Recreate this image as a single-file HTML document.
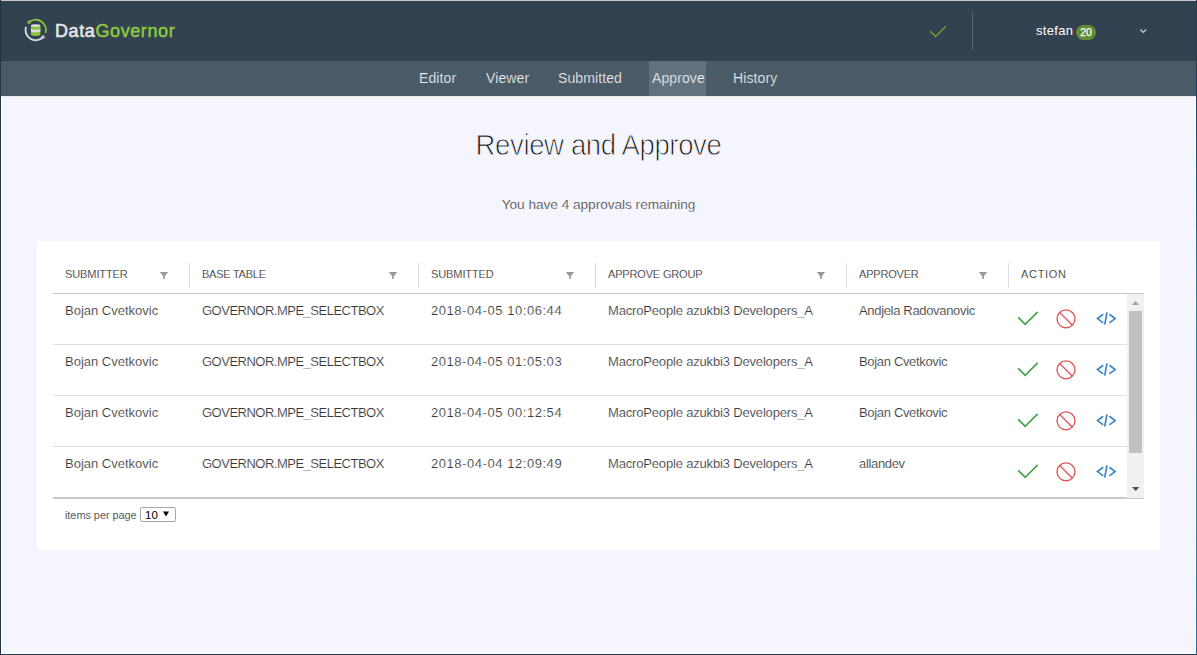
<!DOCTYPE html>
<html><head><meta charset="utf-8">
<style>
*{box-sizing:border-box;margin:0;padding:0}
html,body{width:1197px;height:655px;overflow:hidden;background:#f5f6fd;font-family:"Liberation Sans",sans-serif}
.abs{position:absolute}
svg.abs{overflow:visible}
#topline{left:0;top:0;width:1197px;height:1px;background:#cbc7ca}
#lb{left:0;top:0;width:1px;height:655px;background:#263545}
#rb{left:1196px;top:0;width:1px;height:655px;background:linear-gradient(#2c3b4d 0,#2c3b4d 60px,#1d3c60 96px,#1e5a88 200px,#2a86a0 310px,#3a8a9c 520px,#2a6aa0 655px)}
#rw{left:1195px;top:96px;width:1px;height:558px;background:#fff}
#bb{left:0;top:654px;width:1197px;height:1px;background:#2c3b4d}
#bw{left:1px;top:653px;width:1195px;height:1px;background:#fff}
#lw{left:1px;top:96px;width:1px;height:558px;background:#fff}
#header{left:1px;top:1px;width:1195px;height:60px;background:#334250}
#nav{left:1px;top:61px;width:1195px;height:35px;background:#4a5a66}
#logo-text{left:55px;top:20.5px;font-size:18px;line-height:21px;font-weight:normal;color:#e4e4e6;white-space:nowrap;-webkit-text-stroke:0.55px #e4e4e6;letter-spacing:0.6px}
#logo-text span{-webkit-text-stroke:0.55px #8cc63f}
#logo-text span{color:#8cc63f}
.navi{top:71px;font-size:14px;line-height:14px;color:#eef1f3;white-space:nowrap;letter-spacing:0.1px;-webkit-text-stroke:0.2px #4a5a66}
#nav-active{left:649px;top:61px;width:57px;height:35px;background:#62717d}
#title{left:0;width:1197px;top:131px;text-align:center;font-size:29px;line-height:29px;color:#111;white-space:nowrap;letter-spacing:-0.4px;transform:scaleX(0.95);transform-origin:598.5px 0;-webkit-text-stroke:0.9px #f5f6fd}
#sub{left:0;width:1197px;top:198px;text-align:center;font-size:13.7px;line-height:14px;color:#444;white-space:nowrap;letter-spacing:-0.05px;-webkit-text-stroke:0.2px #f5f6fd}
#card{left:37px;top:241px;width:1123px;height:309px;background:#fff;border-radius:3px}
.th{top:269px;font-size:11px;line-height:11px;color:#2a2a2a;white-space:nowrap;-webkit-text-stroke:0.15px #fff}
.sep{top:263px;width:1px;height:25px;background:#dcdcdc}
.td{font-size:13px;line-height:13px;color:#383838;white-space:nowrap;-webkit-text-stroke:0.15px #fff}
.hr{left:53px;width:1074px;height:1px;background:#dedede}
.filt{top:270px}
#chk{left:0;top:0}
#vsep{left:972px;top:11px;width:1px;height:40px;background:#56636f}
#user{left:1036px;top:24px;font-size:13px;line-height:13px;color:#fff;white-space:nowrap;letter-spacing:0.3px}
#badge{left:1076px;top:25px;width:20px;height:15px;border-radius:7.5px;background:#628c32;color:#fff;font-size:10.5px;font-weight:normal;text-align:center;line-height:15px;-webkit-text-stroke:0.25px #fff}
#foot{left:65px;top:509px;font-size:11px;line-height:12px;color:#5c5c5c;white-space:nowrap;letter-spacing:-0.08px}
#sel{left:140px;top:507px;width:36px;height:15px;border:1px solid #a9a9a9;border-radius:2px;background:#fff;font-size:11.5px;color:#000;padding-left:4px;padding-top:1px;line-height:13px}
</style></head>
<body>
<div class="abs" id="header"></div>
<div class="abs" id="nav"></div>
<div class="abs" id="topline"></div><div class="abs" id="lb"></div><div class="abs" id="rb"></div><div class="abs" id="bb"></div><div class="abs" id="bw"></div><div class="abs" id="lw"></div><div class="abs" id="rw"></div><div class="abs" style="left:1px;top:96px;width:1195px;height:1px;background:#ebe9e8"></div>
<svg class="abs" style="left:0;top:0" width="60" height="50">
<path d="M29.01 22.30A10.2 10.2 0 0 1 45.45 32.98" fill="none" stroke="#8cc63f" stroke-width="1.9"/>
<circle cx="29.01" cy="22.30" r="1.2" fill="none" stroke="#8cc63f" stroke-width="1.1"/>
<path d="M26.00 26.85A10.2 10.2 0 0 0 43.10 37.02" fill="none" stroke="#d9d9de" stroke-width="1.9"/>
<circle cx="43.10" cy="37.02" r="1.2" fill="none" stroke="#d9d9de" stroke-width="1.1"/>
<path d="M30.9 25.5V34.5A4.75 1.4 0 0 0 40.4 34.5V25.5Z" fill="#8cc63f"/>
<ellipse cx="35.65" cy="25.5" rx="4.75" ry="1.3" fill="#dcdce2"/>
<path d="M30.9 28.6A4.75 1.25 0 0 0 40.4 28.6V30.9A4.75 1.25 0 0 1 30.9 30.9Z" fill="#dcdce2"/>
</svg>
<div class="abs" id="logo-text">Data<span>Governor</span></div>
<div class="abs" id="nav-active"></div>
<div class="abs navi" style="left:419px">Editor</div>
<div class="abs navi" style="left:486px">Viewer</div>
<div class="abs navi" style="left:558px">Submitted</div>
<div class="abs navi" style="left:652px;-webkit-text-stroke-color:#62717d">Approve</div>
<div class="abs navi" style="left:733px">History</div>
<svg class="abs" id="chk" width="1" height="1"><path d="M930.3 31.3L935.6 36.5L945.9 26.3" fill="none" stroke="#77a033" stroke-width="1.3"/></svg>
<div class="abs" id="vsep"></div>
<div class="abs" id="user">stefan</div>
<div class="abs" id="badge">20</div>
<svg class="abs" style="left:0;top:0" width="1" height="1"><path d="M1140.3 29.5L1143.2 32.4L1146.1 29.5" fill="none" stroke="#d0d4d8" stroke-width="1.2"/></svg>
<div class="abs" id="title">Review and Approve</div>
<div class="abs" id="sub">You have 4 approvals remaining</div>
<div class="abs" id="card"></div>
<div class="abs th" style="left:65px;letter-spacing:-0.1px">SUBMITTER</div>
<svg class="abs" style="left:0;top:0" width="1" height="1"><path d="M159.8 272H168.2L164.85 276.2V279H163.15V276.2Z" fill="#9a9a9a"/></svg>
<div class="abs th" style="left:202px;letter-spacing:-0.25px">BASE TABLE</div>
<svg class="abs" style="left:0;top:0" width="1" height="1"><path d="M388.8 272H397.2L393.85 276.2V279H392.15V276.2Z" fill="#9a9a9a"/></svg>
<div class="abs th" style="left:431px;letter-spacing:-0.1px">SUBMITTED</div>
<svg class="abs" style="left:0;top:0" width="1" height="1"><path d="M565.8 272H574.2L570.85 276.2V279H569.15V276.2Z" fill="#9a9a9a"/></svg>
<div class="abs th" style="left:608px;letter-spacing:-0.17px">APPROVE GROUP</div>
<svg class="abs" style="left:0;top:0" width="1" height="1"><path d="M816.8 272H825.2L821.85 276.2V279H820.15V276.2Z" fill="#9a9a9a"/></svg>
<div class="abs th" style="left:859px;letter-spacing:-0.2px">APPROVER</div>
<svg class="abs" style="left:0;top:0" width="1" height="1"><path d="M978.8 272H987.2L983.85 276.2V279H982.15V276.2Z" fill="#9a9a9a"/></svg>
<div class="abs th" style="left:1021px;letter-spacing:0.7px">ACTION</div>
<div class="abs sep" style="left:189px"></div>
<div class="abs sep" style="left:418px"></div>
<div class="abs sep" style="left:595px"></div>
<div class="abs sep" style="left:846px"></div>
<div class="abs sep" style="left:1008px"></div>
<div class="abs" style="left:53px;top:293px;width:1091px;height:1px;background:#c9c9c9"></div>
<div class="abs td" style="left:65px;top:304px;letter-spacing:0px">Bojan Cvetkovic</div>
<div class="abs td" style="left:202px;top:304px;letter-spacing:-0.5px">GOVERNOR.MPE_SELECTBOX</div>
<div class="abs td" style="left:431px;top:304px;letter-spacing:0.55px">2018-04-05 10:06:44</div>
<div class="abs td" style="left:608px;top:304px;letter-spacing:-0.17px">MacroPeople azukbi3 Developers_A</div>
<div class="abs td" style="left:859px;top:304px;letter-spacing:-0.33px">Andjela Radovanovic</div>
<div class="abs hr" style="top:344px"></div>
<svg class="abs" style="left:0;top:0px" width="1" height="1"><path d="M1018.2 317.3L1025.2 324.4L1037.7 311.9" fill="none" stroke="#43a347" stroke-width="1.65"/><circle cx="1066" cy="318.8" r="9" fill="none" stroke="#e04e4e" stroke-width="1.3"/><path d="M1059.6 312.4L1072.4 325.2" stroke="#e04e4e" stroke-width="1.3"/><path d="M1103.2 314.3L1097.5 318.6L1103.2 322.9M1107 312.4L1104.7 324.7M1109.4 314.3L1115.1 318.6L1109.4 322.9" fill="none" stroke="#3b87c9" stroke-width="1.7"/></svg>
<div class="abs td" style="left:65px;top:355px;letter-spacing:0px">Bojan Cvetkovic</div>
<div class="abs td" style="left:202px;top:355px;letter-spacing:-0.5px">GOVERNOR.MPE_SELECTBOX</div>
<div class="abs td" style="left:431px;top:355px;letter-spacing:0.55px">2018-04-05 01:05:03</div>
<div class="abs td" style="left:608px;top:355px;letter-spacing:-0.17px">MacroPeople azukbi3 Developers_A</div>
<div class="abs td" style="left:859px;top:355px;letter-spacing:-0.33px">Bojan Cvetkovic</div>
<div class="abs hr" style="top:395px"></div>
<svg class="abs" style="left:0;top:51px" width="1" height="1"><path d="M1018.2 317.3L1025.2 324.4L1037.7 311.9" fill="none" stroke="#43a347" stroke-width="1.65"/><circle cx="1066" cy="318.8" r="9" fill="none" stroke="#e04e4e" stroke-width="1.3"/><path d="M1059.6 312.4L1072.4 325.2" stroke="#e04e4e" stroke-width="1.3"/><path d="M1103.2 314.3L1097.5 318.6L1103.2 322.9M1107 312.4L1104.7 324.7M1109.4 314.3L1115.1 318.6L1109.4 322.9" fill="none" stroke="#3b87c9" stroke-width="1.7"/></svg>
<div class="abs td" style="left:65px;top:406px;letter-spacing:0px">Bojan Cvetkovic</div>
<div class="abs td" style="left:202px;top:406px;letter-spacing:-0.5px">GOVERNOR.MPE_SELECTBOX</div>
<div class="abs td" style="left:431px;top:406px;letter-spacing:0.55px">2018-04-05 00:12:54</div>
<div class="abs td" style="left:608px;top:406px;letter-spacing:-0.17px">MacroPeople azukbi3 Developers_A</div>
<div class="abs td" style="left:859px;top:406px;letter-spacing:-0.33px">Bojan Cvetkovic</div>
<div class="abs hr" style="top:446px"></div>
<svg class="abs" style="left:0;top:102px" width="1" height="1"><path d="M1018.2 317.3L1025.2 324.4L1037.7 311.9" fill="none" stroke="#43a347" stroke-width="1.65"/><circle cx="1066" cy="318.8" r="9" fill="none" stroke="#e04e4e" stroke-width="1.3"/><path d="M1059.6 312.4L1072.4 325.2" stroke="#e04e4e" stroke-width="1.3"/><path d="M1103.2 314.3L1097.5 318.6L1103.2 322.9M1107 312.4L1104.7 324.7M1109.4 314.3L1115.1 318.6L1109.4 322.9" fill="none" stroke="#3b87c9" stroke-width="1.7"/></svg>
<div class="abs td" style="left:65px;top:457px;letter-spacing:0px">Bojan Cvetkovic</div>
<div class="abs td" style="left:202px;top:457px;letter-spacing:-0.5px">GOVERNOR.MPE_SELECTBOX</div>
<div class="abs td" style="left:431px;top:457px;letter-spacing:0.55px">2018-04-04 12:09:49</div>
<div class="abs td" style="left:608px;top:457px;letter-spacing:-0.17px">MacroPeople azukbi3 Developers_A</div>
<div class="abs td" style="left:859px;top:457px;letter-spacing:-0.33px">allandev</div>
<svg class="abs" style="left:0;top:153px" width="1" height="1"><path d="M1018.2 317.3L1025.2 324.4L1037.7 311.9" fill="none" stroke="#43a347" stroke-width="1.65"/><circle cx="1066" cy="318.8" r="9" fill="none" stroke="#e04e4e" stroke-width="1.3"/><path d="M1059.6 312.4L1072.4 325.2" stroke="#e04e4e" stroke-width="1.3"/><path d="M1103.2 314.3L1097.5 318.6L1103.2 322.9M1107 312.4L1104.7 324.7M1109.4 314.3L1115.1 318.6L1109.4 322.9" fill="none" stroke="#3b87c9" stroke-width="1.7"/></svg>
<div class="abs" style="left:53px;top:497px;width:1091px;height:2px;background:#c9c9c9"></div>
<div class="abs" style="left:1127px;top:294px;width:17px;height:204px;background:#f1f1f1"></div>
<div class="abs" style="left:1129px;top:311px;width:13px;height:142px;background:#c1c1c1"></div>
<svg class="abs" style="left:0;top:0" width="1" height="1"><path d="M1132 305H1139L1135.5 301Z" fill="#a3a3a3"/></svg>
<svg class="abs" style="left:0;top:0" width="1" height="1"><path d="M1132 487H1139.3L1135.65 491Z" fill="#505050"/></svg>
<div class="abs" id="foot">items per page</div>
<div class="abs" id="sel">10</div>
<svg class="abs" style="left:0;top:0" width="1" height="1"><path d="M163 511.5H169L166 516.5Z" fill="#000"/></svg>
</body></html>
